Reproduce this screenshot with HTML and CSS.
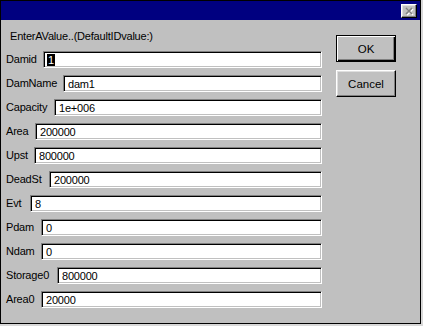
FILE: index.html
```html
<!DOCTYPE html>
<html>
<head>
<meta charset="utf-8">
<link rel="stylesheet" href="styles.css">
</head>
<body>
<div class="window">
  <div class="titlebar">
    <span class="close" aria-label="Close">
      <svg width="10" height="9" viewBox="0 0 10 9" class="xicon">
        <path d="M2 2 L8 8 M8 2 L2 8" stroke="#fff" stroke-width="1.6" fill="none"/>
        <path d="M1 1 L7 7 M7 1 L1 7" stroke="#808080" stroke-width="1.6" fill="none"/>
      </svg>
    </span>
  </div>
  <div class="body">
    <div class="form">
      <div class="prompt">EnterAValue..(DefaultIDvalue:)</div>
      <div class="row"><span class="label" style="--w:37px">Damid</span><div class="field"><span class="sel">1</span></div></div>
      <div class="row"><span class="label" style="--w:57px">DamName</span><div class="field">dam1</div></div>
      <div class="row"><span class="label" style="--w:48px">Capacity</span><div class="field">1e+006</div></div>
      <div class="row"><span class="label" style="--w:29px">Area</span><div class="field">200000</div></div>
      <div class="row"><span class="label" style="--w:28px">Upst</span><div class="field">800000</div></div>
      <div class="row"><span class="label" style="--w:43px">DeadSt</span><div class="field">200000</div></div>
      <div class="row"><span class="label" style="--w:24px">Evt</span><div class="field">8</div></div>
      <div class="row"><span class="label" style="--w:35px">Pdam</span><div class="field">0</div></div>
      <div class="row"><span class="label" style="--w:35px">Ndam</span><div class="field">0</div></div>
      <div class="row"><span class="label" style="--w:51px">Storage0</span><div class="field">800000</div></div>
      <div class="row"><span class="label" style="--w:35px">Area0</span><div class="field">20000</div></div>
    </div>
    <div class="buttons">
      <div class="btn default"><span>OK</span></div>
      <div class="btn"><span>Cancel</span></div>
    </div>
  </div>
</div>
</body>
</html>
```

FILE: styles.css
```css
html, body {
  margin: 0;
  padding: 0;
  background: #d8d8d8;
}
body {
  width: 423px;
  height: 326px;
  overflow: hidden;
  font-family: "Liberation Sans", Arial, sans-serif;
  font-size: 11px;
  letter-spacing: -0.2px;
  color: #000;
}
.window {
  width: 419px;
  height: 322px;
  border: 1px solid #000;
  background: #c0c0c0;
  display: flex;
  flex-direction: column;
}
.titlebar {
  height: 19px;
  background: #000080;
  display: flex;
  justify-content: flex-end;
  align-items: flex-start;
  padding-right: 3px;
}
.close {
  margin-top: 3px;
  width: 16px;
  height: 14px;
  box-sizing: border-box;
  background: #c0c0c0;
  border: 1px solid;
  border-color: #fff #000 #000 #fff;
  box-shadow: inset -1px -1px 0 #808080, inset 1px 1px 0 #dfdfdf;
  display: flex;
  align-items: center;
  justify-content: center;
}
.xicon { display: block; margin-left: 1px; }
.body {
  flex: 1;
  display: flex;
  align-items: flex-start;
}
.form {
  margin-left: 5px;
  width: 316px;
  display: flex;
  flex-direction: column;
}
.prompt {
  margin-top: 9px;
  margin-left: 4px;
  height: 14px;
  line-height: 14px;
  margin-bottom: 8px;
}
.row {
  display: flex;
  align-items: center;
  height: 17px;
  margin-bottom: 7px;
}
.label {
  width: var(--w);
  flex: none;
  white-space: nowrap;
  line-height: 13px;
}
.field {
  flex: 1;
  height: 17px;
  box-sizing: border-box;
  background: #fff;
  border: 1px solid;
  border-color: #808080 #fff #fff #808080;
  box-shadow: inset 1px 1px 0 #000, inset -1px -1px 0 #c0c0c0;
  padding: 2px 0 0 4px;
  line-height: 13px;
}
.sel {
  background: #000;
  color: #fff;
  padding: 0 1px;
  margin-left: -1px;
}
.buttons {
  margin-left: 14px;
  margin-top: 15px;
  display: flex;
  flex-direction: column;
  gap: 8px;
}
.btn {
  width: 60px;
  height: 27px;
  box-sizing: border-box;
  background: #c0c0c0;
  border: 1px solid;
  border-color: #fff #000 #000 #fff;
  box-shadow: inset -1px -1px 0 #808080, inset 1px 1px 0 #dfdfdf;
  display: flex;
  align-items: center;
  justify-content: center;
  font-size: 11.5px;
  letter-spacing: 0;
}
.btn.default {
  border: 1px solid #000;
  box-shadow: inset 1px 1px 0 #fff, inset -1px -1px 0 #000, inset -2px -2px 0 #808080;
}
```
